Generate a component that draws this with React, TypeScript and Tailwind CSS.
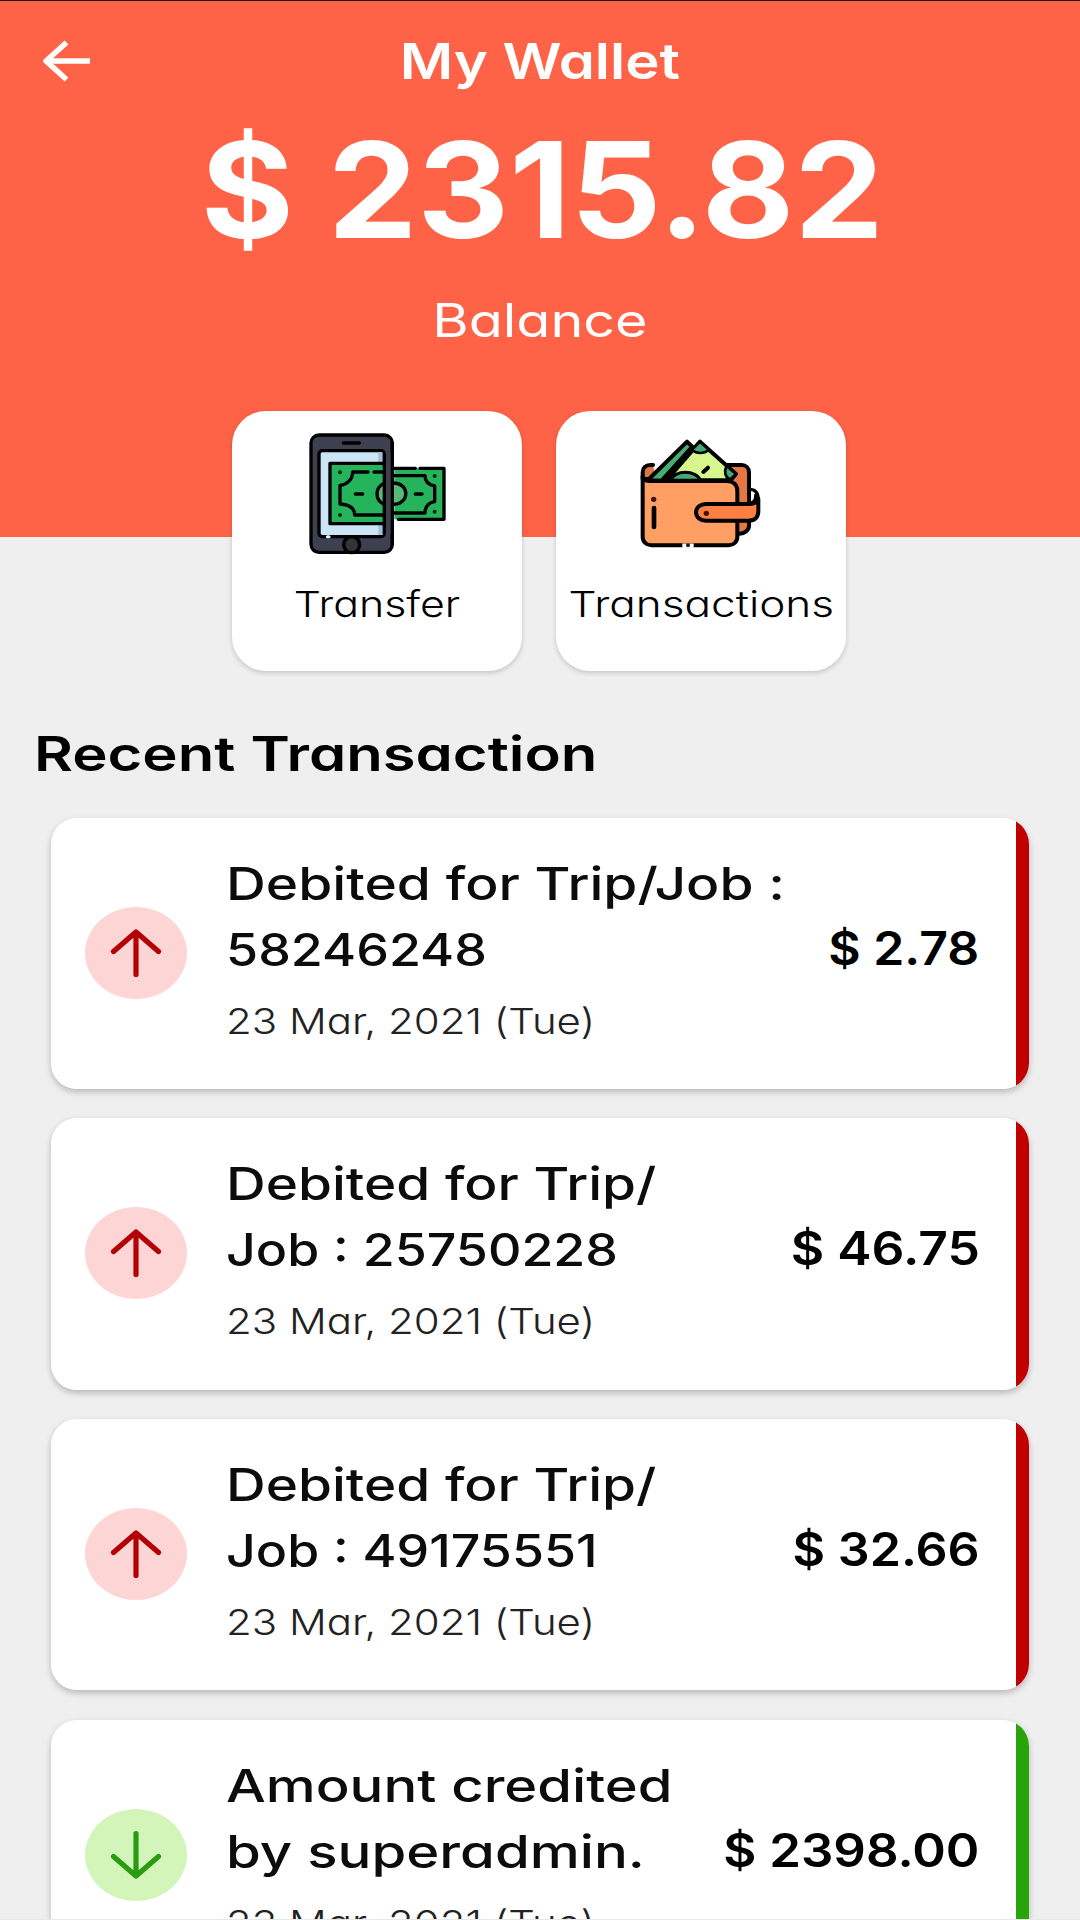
import type { ReactNode } from 'react'
import { clsx } from 'clsx'

type Line = { text: string; stretch: string }

type Transaction = {
  id: number
  kind: 'debit' | 'credit'
  lines: Line[]
  date: string
  amount: Line
}

const transactions: Transaction[] = [
  {
    id: 1,
    kind: 'debit',
    lines: [
      { text: 'Debited for Trip/Job :', stretch: 'scale-x-[1.226]' },
      { text: '58246248', stretch: 'scale-x-[1.155]' },
    ],
    date: '23 Mar, 2021 (Tue)',
    amount: { text: '$ 2.78', stretch: 'scale-x-[1.085]' },
  },
  {
    id: 2,
    kind: 'debit',
    lines: [
      { text: 'Debited for Trip/', stretch: 'scale-x-[1.222]' },
      { text: 'Job : 25750228', stretch: 'scale-x-[1.153]' },
    ],
    date: '23 Mar, 2021 (Tue)',
    amount: { text: '$ 46.75', stretch: 'scale-x-[1.12]' },
  },
  {
    id: 3,
    kind: 'debit',
    lines: [
      { text: 'Debited for Trip/', stretch: 'scale-x-[1.222]' },
      { text: 'Job : 49175551', stretch: 'scale-x-[1.152]' },
    ],
    date: '23 Mar, 2021 (Tue)',
    amount: { text: '$ 32.66', stretch: 'scale-x-[1.09]' },
  },
  {
    id: 4,
    kind: 'credit',
    lines: [
      { text: 'Amount credited', stretch: 'scale-x-[1.248]' },
      { text: 'by superadmin.', stretch: 'scale-x-[1.252]' },
    ],
    date: '23 Mar, 2021 (Tue)',
    amount: { text: '$ 2398.00', stretch: 'scale-x-[1.107]' },
  },
]

function BackArrow() {
  return (
    <svg width="48" height="42" viewBox="0 0 48 42" fill="none" stroke="#fff" strokeWidth="5.5">
      <path d="M48 21H4" />
      <path d="M24.5 2.5 4 21l20.5 18.5" strokeLinejoin="round" />
    </svg>
  )
}

function TransferIcon() {
  return (
    <svg width="155" height="135" viewBox="0 0 465 405" fill="none" stroke="#000" strokeWidth="10" strokeLinecap="round" strokeLinejoin="round">
      <rect x="33" y="30" width="244" height="352" rx="24" fill="#3d404f" />
      <path d="M130 54h48" />
      <rect x="57" y="77" width="196" height="258" rx="10" fill="#cbe5f7" />
      <path d="M235 82h13v248h-13z" fill="#a3bfd6" stroke="none" />
      <path d="M250 115H90v181h160" fill="#25b45b" />
      <path d="M283 130h149v153H283z" fill="#25b45b" stroke="none" />
      <path d="M283 130h63M360 130h72v153H295" />
      <path d="M250 270h-86c0-18-14-31-44-33v-56c20-2 38-16 38-40h46M222 141h28" />
      <path d="M283 152h92c0 18 10 27 29 31v47c-18 3-29 12-29 34h-92" />
      <path d="M250 176a34 34 0 0 0 0 61" fill="#55b978" />
      <path d="M283 174c46 3 46 60 0 64" fill="#55b978" />
      <path d="M166 207h22M346 207h20" />
      <g fill="#062b14" stroke="none">
        <circle cx="120" cy="142" r="6" />
        <circle cx="120" cy="270" r="6" />
        <circle cx="404" cy="153" r="6" />
        <circle cx="404" cy="260" r="6" />
      </g>
      <path d="M254 82h23v248h-23z" fill="#3d404f" stroke="none" />
      <path d="M253 87v238M277 54v304" />
      <circle cx="155" cy="359" r="24" fill="#33323b" />
      <path d="M82 335h5" stroke="#e6f6ff" strokeWidth="9" />
    </svg>
  )
}

function WalletIcon() {
  return (
    <svg width="140" height="125" viewBox="4 0 420 375" fill="none" stroke="#000" strokeWidth="12" strokeLinecap="round" strokeLinejoin="round">
      <path d="M70 105h-8c-14 0-23 9-23 22v20h40" fill="#d97745" />
      <path d="M290 105h46c13 0 22 9 22 22v160c0 12-12 24-30 24h-24" fill="#e57842" />
      <path d="M358 178c19 0 28 12 28 30M358 218c16 0 20-9 20-24" strokeWidth="9" />
      <path d="M110 151 211 35l108 97-16 19z" fill="#d5f78d" />
      <path d="M55 150 172 35l16 15L96 152z" fill="#45ae72" />
      <path d="M186 59 211 35l27 24c-16 13-36 13-52 0zM291 108l28 24-18 17c-15-8-19-25-10-41z" fill="#45a878" strokeWidth="8" />
      <path d="M124 151c8-32 77-32 88 0z" fill="#45a878" strokeWidth="9" />
      <path d="m221 126 14-13" />
      <path d="M39 138v183c0 14 11 25 26 25h232c15 0 26-11 26-25V184c0-19-12-31-32-31H58c-12 0-19-6-19-15z" fill="#ff9f63" />
      <path d="M386 207v37c0 18-11 28-28 28H229c-17 0-30-10-30-25s13-25 30-25h130c15 0 24-5 27-15z" fill="#fc8044" />
      <path d="M73 234v57" strokeWidth="14" />
      <g fill="#3c1609" stroke="none">
        <circle cx="72" cy="208" r="8" />
        <circle cx="230" cy="250" r="8" />
      </g>
      <path d="M158 347h34" stroke="#fff" strokeWidth="13" strokeLinecap="butt" />
      <circle cx="175" cy="346" r="6" fill="#3c1609" stroke="none" />
    </svg>
  )
}

function ActionCard({ icon, label, stretch }: { icon: ReactNode; label: string; stretch: string }) {
  return (
    <button className="flex h-[260px] w-[290px] flex-col items-center rounded-[34px] bg-white pt-[14px] shadow-[0_2px_5px_rgba(0,0,0,0.18)]">
      <span className="flex h-[135px] items-center">{icon}</span>
      <span className={clsx('mt-5 text-[36px] leading-[48px] font-[360] whitespace-nowrap', stretch)}>{label}</span>
    </button>
  )
}

function DirectionBadge({ kind }: { kind: Transaction['kind'] }) {
  const debit = kind === 'debit'
  return (
    <div
      className={clsx(
        'flex h-[92px] w-[102px] shrink-0 items-center justify-center rounded-[50%]',
        debit ? 'bg-[#fed5d5] text-[#b30006]' : 'rotate-180 bg-[#d4f5b9] text-[#2a9c11]'
      )}
    >
      <svg width="102" height="92" viewBox="0 0 102 92" fill="none" stroke="currentColor" strokeWidth="5.2" strokeLinecap="round" strokeLinejoin="round">
        <path d="M51 25v42.500M28.500 44.500 51 25l22.500 19.500" />
      </svg>
    </div>
  )
}

function TransactionCard({ item }: { item: Transaction }) {
  return (
    <div className="flex h-[271.500px] shrink-0 overflow-hidden rounded-[26px] bg-white">
      <div className="flex flex-1 pl-[34px]">
        <div className="flex items-center pb-px">
          <DirectionBadge kind={item.kind} />
        </div>
        <div className="flex-1 pt-[33px] pl-[39px]">
          {item.lines.map((line) => (
            <p
              key={line.text}
              className={clsx('w-max origin-left text-[45px] leading-[66px] font-[470] whitespace-nowrap text-[#0c0c0c]', line.stretch)}
            >
              {line.text}
            </p>
          ))}
          <p className="mt-[15px] w-max origin-left scale-x-[1.165] text-[36px] leading-[46px] font-light whitespace-nowrap text-[#222]">
            {item.date}
          </p>
        </div>
        <p
          className={clsx(
            'mt-[97px] mr-[36px] h-[66px] origin-right text-[46px] leading-[66px] font-semibold whitespace-nowrap',
            item.amount.stretch
          )}
        >
          {item.amount.text}
        </p>
      </div>
      <div className={clsx('w-[13.500px]', item.kind === 'debit' ? 'bg-[#c00000]' : 'bg-[#28a40b]')} />
    </div>
  )
}

export default function App() {
  return (
    <div className="flex h-[1920px] w-[1080px] flex-col overflow-hidden border-b border-[#e8e8e8] bg-[#efefef] font-['Inter',sans-serif] text-black [font-feature-settings:'cv11']">
      <header className="flex h-[537px] shrink-0 flex-col items-center border-t border-[#2a0b0b] bg-[#ff6347] text-white">
        <div className="grid h-[120px] w-full shrink-0 grid-cols-[1fr_auto_1fr] items-center pl-[42px]">
          <button className="w-12">
            <BackArrow />
          </button>
          <h1 className="-ml-[42px] scale-x-[1.16] text-[50px] leading-[60px] font-[560] whitespace-nowrap">My Wallet</h1>
        </div>
        <p className="scale-x-[1.07] pl-1 text-[133px] leading-[138px] font-bold whitespace-nowrap">$ 2315.82</p>
        <p className="mt-[31px] scale-x-[1.21] text-[46px] leading-[60px]">Balance</p>
      </header>

      <div className="-mt-[126px] flex shrink-0 justify-center gap-[34px] pr-[2px]">
        <ActionCard icon={<TransferIcon />} label="Transfer" stretch="scale-x-[1.19]" />
        <ActionCard icon={<WalletIcon />} label="Transactions" stretch="scale-x-[1.225]" />
      </div>

      <h2 className="mt-[53px] ml-[34px] w-max shrink-0 origin-left scale-x-[1.245] text-[48px] leading-[60px] font-semibold whitespace-nowrap">
        Recent Transaction
      </h2>

      <div className="mt-[33.500px] flex flex-col gap-[29.200px] pr-[51px] pl-[50.500px]">
        {transactions.map((item) => (
          <div key={item.id} className="rounded-[26px] shadow-[0_3px_6px_rgba(0,0,0,0.24)]">
            <TransactionCard item={item} />
          </div>
        ))}
      </div>
    </div>
  )
}
